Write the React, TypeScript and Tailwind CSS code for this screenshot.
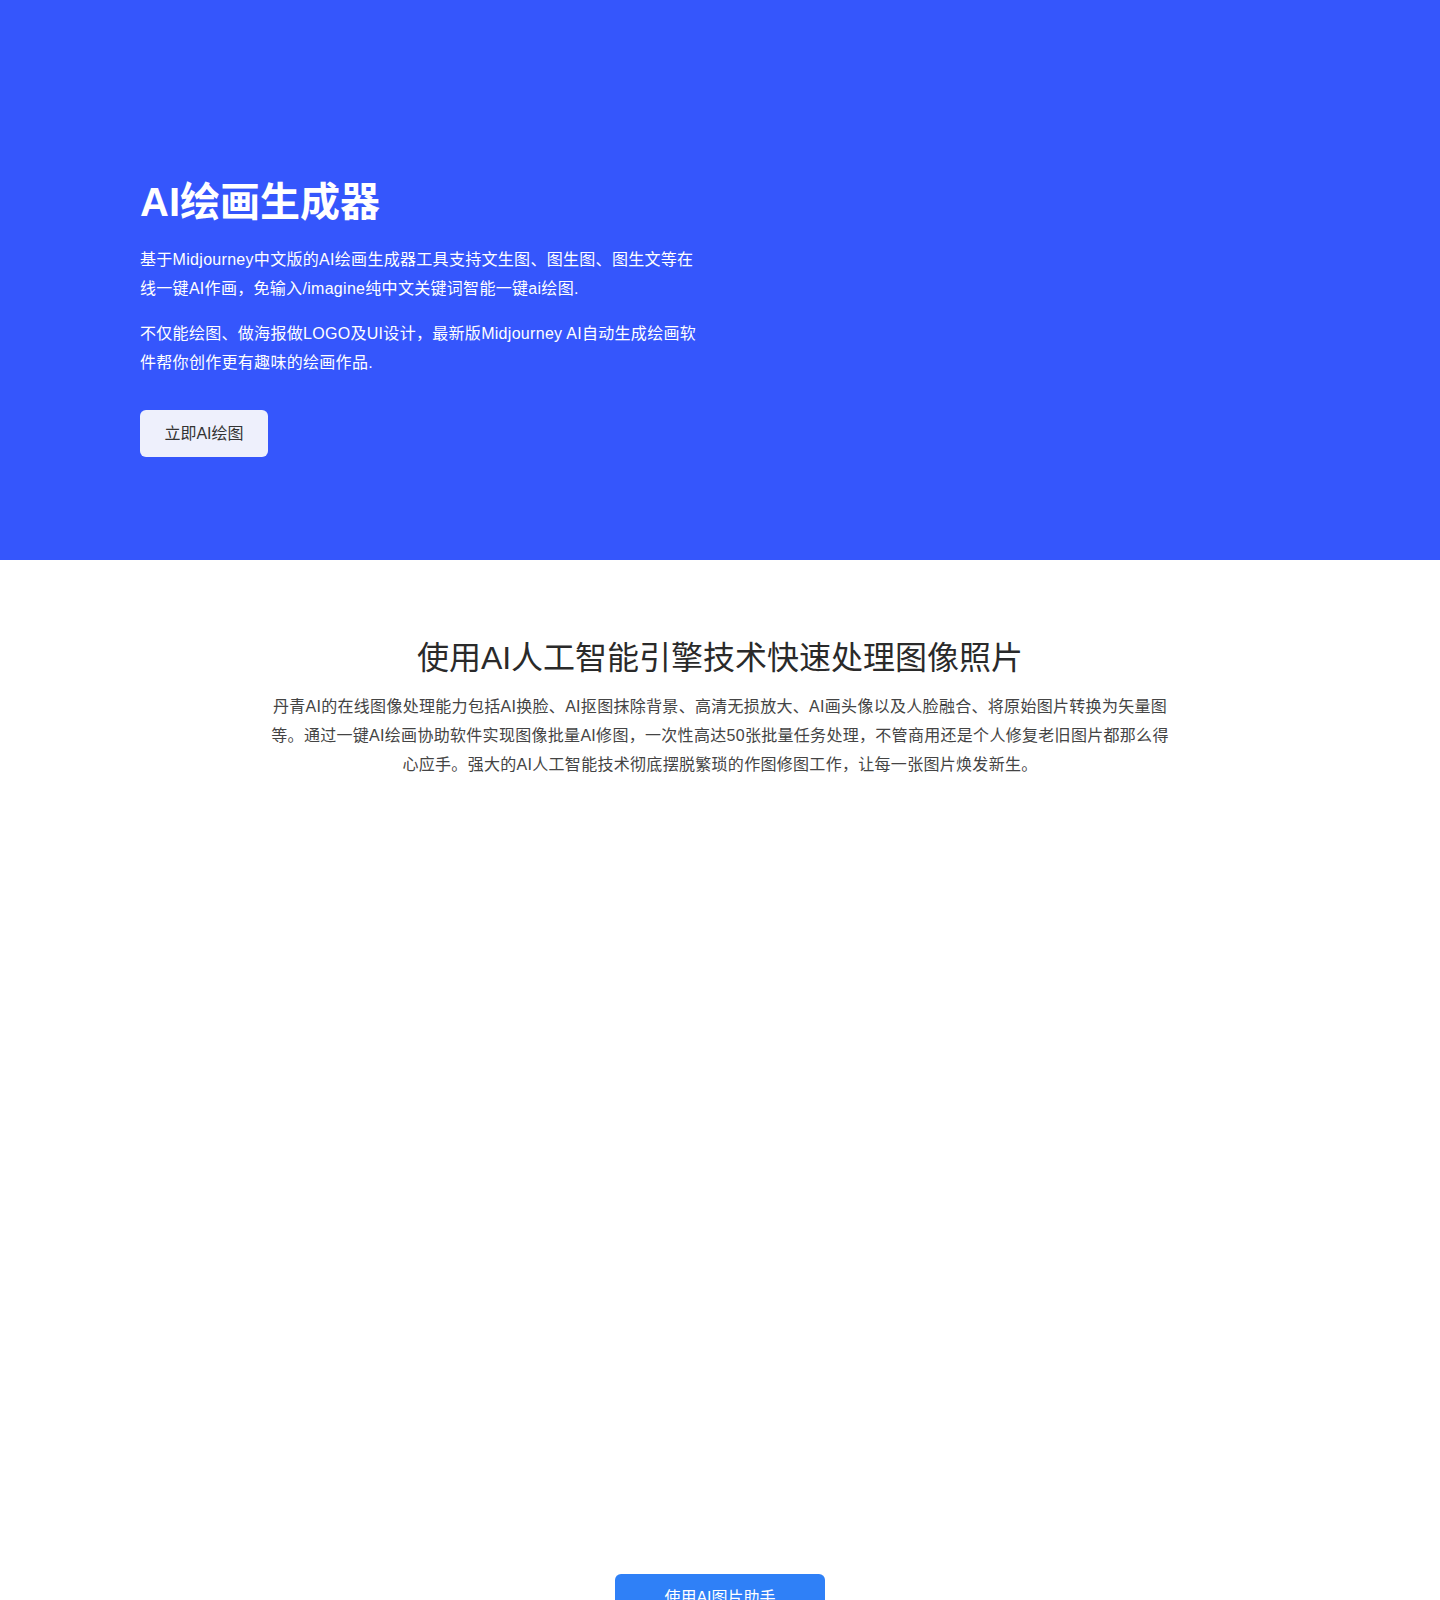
export default function App() {
  return (
    <div
      className="min-h-screen bg-white"
      style={{ fontFamily: '"Liberation Sans", "Noto Sans CJK SC", sans-serif' }}
    >
      {/* Hero */}
      <section className="h-[560px] bg-[#3556fc]">
        <div className="max-w-[1160px] mx-auto pt-[178px]">
          <h1 className="text-[40px] leading-[48px] font-bold text-white">
            AI绘画生成器
          </h1>

          <p className="mt-[19px] max-w-[560px] text-[16px] leading-[29px] tracking-[0.3px] text-white">
            基于Midjourney中文版的AI绘画生成器工具支持文生图、图生图、图生文等在线一键AI作画，免输入/imagine纯中文关键词智能一键ai绘图.
          </p>

          <p className="mt-4 max-w-[560px] text-[16px] leading-[29px] tracking-[0.3px] text-white">
            不仅能绘图、做海报做LOGO及UI设计，最新版Midjourney AI自动生成绘画软件帮你创作更有趣味的绘画作品.
          </p>

          <button className="mt-[33px] w-[128px] h-[47px] rounded-md bg-[#eef0fc] text-[16px] text-[#333]">
            立即AI绘图
          </button>
        </div>
      </section>

      {/* Features */}
      <section className="pt-[77px] flex flex-col items-center">
        <h2 className="text-[32px] leading-[42px] text-[#2a2a2a]">
          使用AI人工智能引擎技术快速处理图像照片
        </h2>

        <p className="mt-[13px] max-w-[905px] text-center text-[16px] leading-[29px] tracking-[0.3px] text-[#444]">
          丹青AI的在线图像处理能力包括AI换脸、AI抠图抹除背景、高清无损放大、AI画头像以及人脸融合、将原始图片转换为矢量图等。通过一键AI绘画协助软件实现图像批量AI修图，一次性高达50张批量任务处理，不管商用还是个人修复老旧图片都那么得心应手。强大的AI人工智能技术彻底摆脱繁琐的作图修图工作，让每一张图片焕发新生。
        </p>

        {/* image area (empty) */}
        <div className="h-[795px]" />

        <button className="w-[210px] h-[48px] rounded-md bg-[#2f80f7] text-[16px] text-white">
          使用AI图片助手
        </button>
      </section>
    </div>
  );
}
